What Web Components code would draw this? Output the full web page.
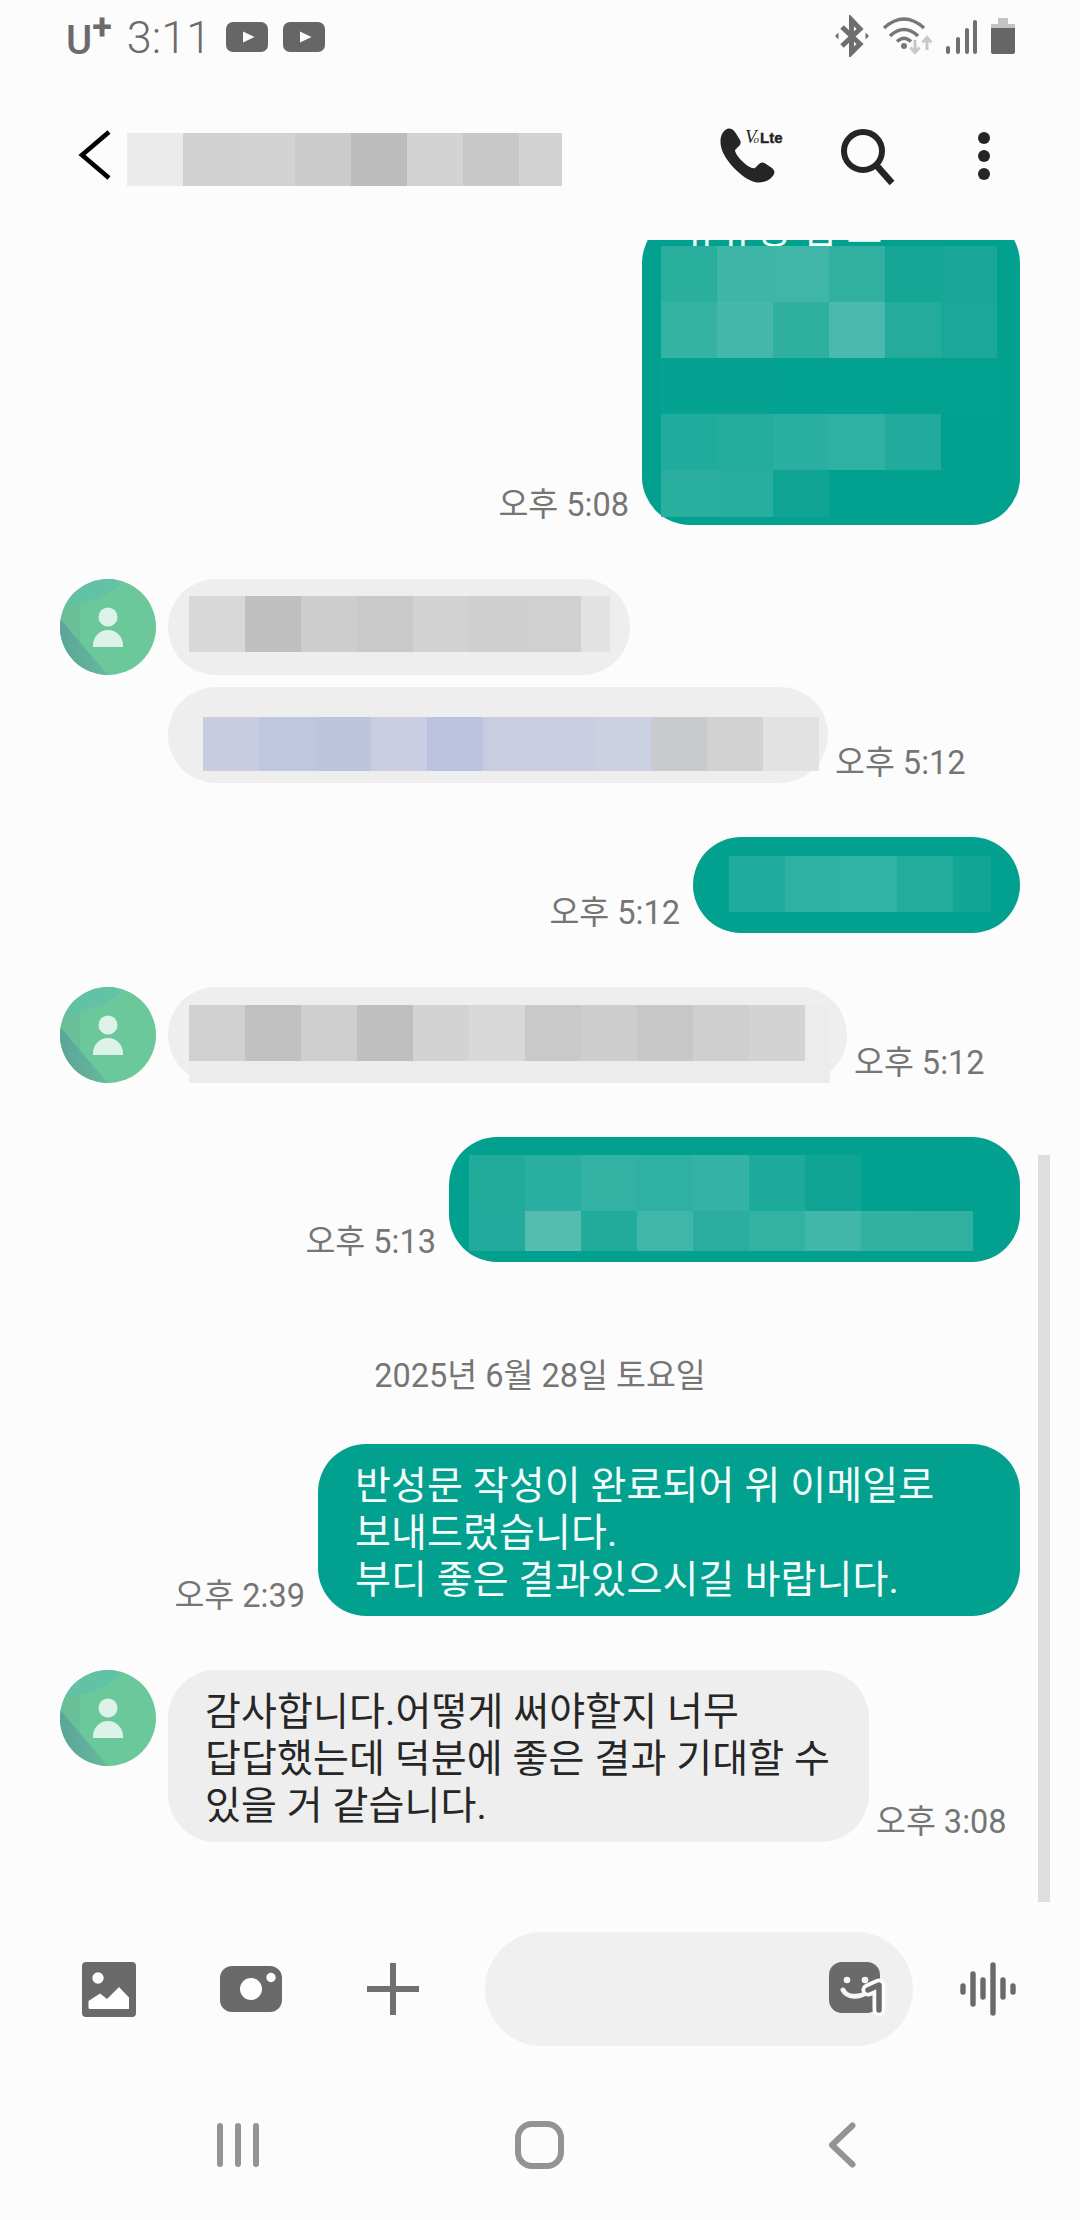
<!DOCTYPE html>
<html lang="ko">
<head>
<meta charset="utf-8">
<title>메시지</title>
<style>
html, body { margin: 0; padding: 0; }
body {
    width: 1080px;
    height: 2220px;
    display: flex;
    flex-direction: column;
    overflow: hidden;
    background: #fcfcfc;
    font-family: Roboto, "Noto Sans CJK KR", sans-serif;
}
</style>
</head>
<body>
<status-bar></status-bar>
<chat-header></chat-header>
<chat-list>
    <chat-message side="out" first time="오후 5:08" width="378" pad="0 23px 8px 19px">
        <clipped-line>규규정 법 그</clipped-line>
        <pixel-mosaic rows="56:2aae9e,3db5a7,3fb6a8,31b0a1,16a696,18a797;56:34b2a4,45b8ab,2fb09f,4ab9ae,24ab9c,1aa898;56:06a291,06a291,04a292,04a292,03a190,03a190;56:20ac9c,24ad9d,2bafa0,2fb0a2,21ab9c;47:29ae9f,28ae9e,0fa493"></pixel-mosaic>
    </chat-message>
    <chat-message side="in" avatar pad="17px 20px 23px 21px">
        <pixel-mosaic rows="56:d8d8d8,bfbfbf,cdcdcd,c9c9c9,d2d2d2,cfcfcf,d0d0d0,e2e2e2@29"></pixel-mosaic>
    </chat-message>
    <chat-message side="in" tight time="오후 5:12" pad="30px 9px 12px 35px">
        <pixel-mosaic rows="54:c7cce0,c2c7e0,bdc4de,c9cee2,bcc3de,c8cde1,c8cde1,cbd0e2,c9cace,d2d2d2,e2e2e2"></pixel-mosaic>
    </chat-message>
    <chat-message side="out" time="오후 5:12" pad="19px 29px 21px 36px">
        <pixel-mosaic rows="56:20ac9c,2eb1a2,32b2a4,22ac9c,10a595@38"></pixel-mosaic>
    </chat-message>
    <chat-message side="in" avatar time="오후 5:12" pad="18px 17px 0 21px">
        <pixel-mosaic rows="56:d0d0d0,c1c1c1,cfcfcf,bfbfbf,d3d3d3,d8d8d8,c9c9c9,cdcdcd,c7c7c7,cfcfcf,d3d3d3,ececec@25;22:ececec@641"></pixel-mosaic>
    </chat-message>
    <chat-message side="out" time="오후 5:13" pad="18px 47px 11px 20px">
        <pixel-mosaic rows="56:21ab9b,2aae9f,33b2a4,2eb1a2,34b2a5,1eaa9a,10a494;40:22ab9c,54bcb1,20ab9b,40b6a9,2bae9f,33b1a3,41b6aa,32b1a3,31b0a2"></pixel-mosaic>
    </chat-message>
    <chat-date>2025년 6월 28일 토요일</chat-date>
    <chat-message side="out" time="오후 2:39" width="702" pad="19px 37px 12px 37px">반성문 작성이 완료되어 위 이메일로<br>보내드렸습니다.<br>부디 좋은 결과있으시길 바랍니다.</chat-message>
    <chat-message side="in" avatar time="오후 3:08" width="701" pad="19px 37px 12px 37px">감사합니다.어떻게 써야할지 너무<br>답답했는데 덕분에 좋은 결과 기대할 수<br>있을 거 같습니다.</chat-message>
</chat-list>
<composer-bar></composer-bar>
<nav-bar></nav-bar>

<script>
const ICONS = {
    youtube: [42, 30, '<rect width="42" height="30" rx="7" fill="#666"/><path d="M17 9.500 28.500 15 17 20.500z" fill="#fcfcfc"/>'],
    bluetooth: [36, 42, '<path d="M8 12 26 29 17.500 37.500V5L26 14 8 31" fill="none" stroke="#6e6e6e" stroke-width="5"/><path d="M1 21 4.500 17.500V24.500zM35 21 31.500 17.500V24.500z" fill="#6e6e6e"/>'],
    wifi: [52, 42, '<g fill="none" stroke="#777" stroke-width="3.400"><path d="M2 13Q22-5 42 13"/><path d="M8 21Q22 8 36 21"/><path d="M15 26.500Q22 20 29 26.500"/></g><circle cx="22" cy="31" r="3" fill="#777"/><g fill="none" stroke="#c8c8c8" stroke-width="3"><path d="M33 25V37M28.500 32.500 33 37.500 37.500 32.500"/><path d="M45 35V23M40.500 27.500 45 22.500 49.500 27.500"/></g>'],
    signal: [32, 42, '<g fill="#707070"><rect x="0" y="31" width="4" height="8" rx="2"/><rect x="10" y="22" width="4" height="17" rx="2"/><rect x="19" y="13" width="4" height="26" rx="2"/><rect x="27" y="5" width="4" height="34" rx="2"/></g>'],
    battery: [26, 42, '<path d="M8 3H18V9H25V14H1V9H8z" fill="#c4c4c4"/><path d="M1 13H25V37Q25 39 23 39H3Q1 39 1 37z" fill="#666"/>'],
    chevron: [34, 52, '<path d="M31 3 4 26 31 49" fill="none" stroke="#000" stroke-width="4.600"/>'],
    phone: [84, 72, '<path d="M28 8.500C24 10 21 14 20.500 20C20 30 25 38 33 47C41 55 48 61 57 62.500C64 63 71 60 74 54C75 51 74 50 72 48L66 44C63 42 61 42 59 44L55 48C52 49 47 46 42 41C37 36 35 32 35 30L39 26C41 24 41 22 40 20L35 12C33 9 30 8 28 8.500Z" fill="#252525"/><text x="45" y="23" font-family="Liberation Serif" font-style="italic" font-size="19" fill="#252525">V<tspan font-size="11" dx="-3">o</tspan></text><text x="60" y="23" font-family="Liberation Sans" font-weight="700" font-size="15" stroke="#252525" stroke-width=".4" fill="#252525">Lte</text>'],
    search: [56, 60, '<circle cx="24" cy="24" r="19" fill="none" stroke="#252525" stroke-width="6"/><path d="M38 39 53 56" stroke="#252525" stroke-width="6.500"/>'],
    dots: [16, 52, '<g fill="#252525"><circle cx="8" cy="8" r="6"/><circle cx="8" cy="26" r="6"/><circle cx="8" cy="44" r="6"/></g>'],
    image: [54, 55, '<rect width="54" height="55" rx="4" fill="#6a6a6a"/><circle cx="16" cy="16" r="5.700" fill="#fff"/><path d="M6.500 41V39L18 31.500 25 37 37 25 47 35.500V47H8Q6.500 47 6.500 45.500z" fill="#fff"/>'],
    camera: [62, 46, '<rect width="62" height="46" rx="12" fill="#6a6a6a"/><circle cx="31" cy="23" r="11" fill="#fff"/><circle cx="51" cy="11.500" r="4.700" fill="#fff"/>'],
    plus: [52, 52, '<path d="M26 0V52M0 26H52" stroke="#707070" stroke-width="6"/>'],
    emoji: [58, 54, '<rect width="51" height="51" rx="13" fill="#6a6a6a"/><circle cx="18" cy="18" r="3.300" fill="#f5f5f5"/><circle cx="36" cy="18" r="3.300" fill="#f5f5f5"/><path d="M14 28C18 36 30 36 39 30" fill="none" stroke="#f5f5f5" stroke-width="5" stroke-linecap="round"/><path d="M39 28 50 23V48" fill="none" stroke="#fcfcfc" stroke-width="13" stroke-linecap="round" stroke-linejoin="round"/><path d="M39 28 50 23V48" fill="none" stroke="#6a6a6a" stroke-width="5.500" stroke-linecap="round" stroke-linejoin="round"/>'],
    wave: [56, 54, '<g stroke="#6a6a6a" stroke-width="5.400" stroke-linecap="round"><path d="M3 24V30M13 12V42M23 18V35M33 3V51M43 18V35M53 24V30"/></g>'],
    recents: [42, 44, '<g fill="#939393"><rect width="6" height="44" rx="3"/><rect x="18" width="6" height="44" rx="3"/><rect x="36" width="6" height="44" rx="3"/></g>'],
    home: [49, 48, '<rect x="3" y="3" width="43" height="42" rx="14" fill="none" stroke="#939393" stroke-width="6"/>'],
    back: [28, 46, '<path d="M24.500 3.500 4 23 24.500 42.500" fill="none" stroke="#939393" stroke-width="6" stroke-linecap="round" stroke-linejoin="round"/>']
};

class UiIcon extends HTMLElement {
    static get is() { return 'ui-icon'; }
    connectedCallback() {
        const [w, h, body] = ICONS[this.getAttribute('name')];
        this.attachShadow({mode: 'open'}).innerHTML = `
            <style>:host{display:block;flex:none;width:${w}px;height:${h}px} svg{display:block}</style>
            <svg width="${w}" height="${h}" viewBox="0 0 ${w} ${h}">${body}</svg>`;
    }
}

// rows="height:color,color@width;height:..." , a cell is 56 wide unless it says otherwise
class PixelMosaic extends HTMLElement {
    static get is() { return 'pixel-mosaic'; }
    connectedCallback() {
        const rows = this.getAttribute('rows').split(';').map(row => {
            const [h, cells] = row.split(':');
            const html = cells.split(',').map(cell => {
                const [color, w] = cell.split('@');
                return `<i style="background:#${color};width:${w || 56}px"></i>`;
            }).join('');
            return `<div style="height:${h}px">${html}</div>`;
        }).join('');
        this.attachShadow({mode: 'open'}).innerHTML = `
            <style>
            :host{display:block}
            div{display:flex}
            i{display:block;flex:none}
            </style>${rows}`;
    }
}

class ClippedLine extends HTMLElement {
    static get is() { return 'clipped-line'; }
    constructor() {
        super();
        this.attachShadow({mode: 'open'}).innerHTML = `
            <style>
            :host{display:block;height:31px;line-height:31px;padding-left:22px;overflow:hidden}
            </style><slot></slot>`;
    }
}

class StatusBar extends HTMLElement {
    static get is() { return 'status-bar'; }
    constructor() {
        super();
        this.attachShadow({mode: 'open'}).innerHTML = `
            <style>
            :host{display:flex;flex:none;height:78px;box-sizing:border-box;padding:15px 64px 0 66px;color:#6b6b6b}
            .brand{font-size:40px;font-weight:500;line-height:46px;margin-top:3px}
            .brand sup{font-size:36px;font-weight:700;line-height:0;vertical-align:15px;margin-left:0}
            .time{font-size:45px;font-weight:300;line-height:46px;margin:0 15px 0 15px}
            ui-icon[name=youtube]{margin:6.500px 15px 0 0}
            .right{display:flex;gap:12px;margin-left:auto}
            </style>
            <span class="brand">U<sup>+</sup></span>
            <span class="time">3:11</span>
            <ui-icon name="youtube"></ui-icon>
            <ui-icon name="youtube"></ui-icon>
            <div class="right">
                <ui-icon name="bluetooth"></ui-icon>
                <ui-icon name="wifi"></ui-icon>
                <ui-icon name="signal"></ui-icon>
                <ui-icon name="battery"></ui-icon>
            </div>`;
    }
}

class ChatHeader extends HTMLElement {
    static get is() { return 'chat-header'; }
    constructor() {
        super();
        this.attachShadow({mode: 'open'}).innerHTML = `
            <style>
            :host{display:flex;flex:none;height:162px;box-sizing:border-box;padding:0 88px 0 78px;align-items:flex-start}
            ui-icon[name=chevron]{margin:51px 15px 0 0}
            pixel-mosaic{margin-top:55px}
            ui-icon[name=phone]{margin:42px 0 0 auto}
            ui-icon[name=search]{margin:49px 0 0 55px}
            ui-icon[name=dots]{margin:52px 0 0 81px}
            </style>
            <ui-icon name="chevron"></ui-icon>
            <pixel-mosaic rows="53:ebebeb,d0d0d0,d3d3d3,cccccc,bcbcbc,d3d3d3,c8c8c8,d3d3d3@43"></pixel-mosaic>
            <ui-icon name="phone"></ui-icon>
            <ui-icon name="search"></ui-icon>
            <ui-icon name="dots"></ui-icon>`;
    }
}

class ChatList extends HTMLElement {
    static get is() { return 'chat-list'; }
    constructor() {
        super();
        this.attachShadow({mode: 'open'}).innerHTML = `
            <style>
            :host{display:block;flex:1;min-height:0;position:relative;overflow:hidden}
            .thumb{position:absolute;left:1038px;top:915px;width:12px;height:747px;background:#dedede}
            </style>
            <slot></slot>
            <div class="thumb"></div>`;
    }
}

class ChatDate extends HTMLElement {
    static get is() { return 'chat-date'; }
    constructor() {
        super();
        this.attachShadow({mode: 'open'}).innerHTML = `
            <style>
            :host{display:block;margin:96px 0 -4px;text-align:center;font-size:32.500px;line-height:36px;color:#757575}
            </style><slot></slot>`;
    }
}

const AVATAR = `<svg width="96" height="96" viewBox="0 0 96 96">
    <defs>
        <clipPath id="c"><circle cx="48" cy="48" r="48"/></clipPath>
        <linearGradient id="w" x1="0" y1="0" x2="1" y2="0"><stop offset="0" stop-color="#5ca49a"/><stop offset="1" stop-color="#66ba9a"/></linearGradient>
    </defs>
    <g clip-path="url(#c)">
        <rect width="96" height="96" fill="#6ac89b"/>
        <rect width="20" height="96" fill="#68bf98"/>
        <path d="M0 28Q34 26 62 5L50-4H0z" fill="#62c2a6"/>
        <path d="M0 40 48 96H0z" fill="url(#w)"/>
    </g>
    <ellipse cx="48" cy="38" rx="9.500" ry="9.500" fill="#ddf2e8"/>
    <path d="M33 68V66A15 15 0 0 1 63 66V68z" fill="#ddf2e8"/>
</svg>`;

class ChatMessage extends HTMLElement {
    static get is() { return 'chat-message'; }
    connectedCallback() {
        const outgoing = this.getAttribute('side') === 'out';
        const time = this.getAttribute('time');
        const width = this.getAttribute('width');
        const timeEl = time ? `<span class="time">${time}</span>` : '';
        const avatar = this.hasAttribute('avatar') ? `<div class="avatar">${AVATAR}</div>` : '';
        const bubble = `<div class="bubble"><slot></slot></div>`;
        this.attachShadow({mode: 'open'}).innerHTML = `
            <style>
            :host{display:flex;align-items:flex-end;margin-top:54px;justify-content:${outgoing ? 'flex-end' : 'flex-start'};
                padding:0 60px 0 ${!outgoing && !this.hasAttribute('avatar') ? 168 : 60}px}
            :host([tight]){margin-top:12px}
            :host([first]){margin-top:-25px}
            .avatar{flex:none;width:96px;height:96px;margin-right:12px;align-self:flex-start}
            .avatar svg{display:block}
            .bubble{flex:none;box-sizing:border-box;${width ? `width:${width}px;` : ''}padding:${this.getAttribute('pad')};
                border-radius:48px;white-space:nowrap;font-size:39px;line-height:47px;letter-spacing:.12px;
                background:${outgoing ? '#02a08f' : '#eeeeee'};color:${outgoing ? '#f4fbfa' : '#262626'}}
            .time{flex:none;font-size:32.500px;line-height:36px;color:#757575;margin:0 ${outgoing ? '13px' : '0'} 2px ${outgoing ? '0' : '7px'};white-space:nowrap}
            </style>
            ${outgoing ? timeEl + bubble : avatar + bubble + timeEl}`;
    }
}

class ComposerBar extends HTMLElement {
    static get is() { return 'composer-bar'; }
    constructor() {
        super();
        this.attachShadow({mode: 'open'}).innerHTML = `
            <style>
            :host{display:flex;flex:none;align-items:center;height:114px;margin-bottom:24px;padding-left:82px}
            ui-icon[name=camera]{margin-left:84px}
            ui-icon[name=plus]{margin:0 66px 0 85px}
            .field{flex:none;box-sizing:border-box;width:428px;height:114px;padding-right:26px;border-radius:57px;background:#f0f0f0;display:flex;align-items:center;justify-content:flex-end}
            ui-icon[name=wave]{margin-left:47px}
            </style>
            <ui-icon name="image"></ui-icon>
            <ui-icon name="camera"></ui-icon>
            <ui-icon name="plus"></ui-icon>
            <div class="field"><ui-icon name="emoji"></ui-icon></div>
            <ui-icon name="wave"></ui-icon>`;
    }
}

class NavBar extends HTMLElement {
    static get is() { return 'nav-bar'; }
    constructor() {
        super();
        this.attachShadow({mode: 'open'}).innerHTML = `
            <style>
            :host{display:flex;flex:none;align-items:center;height:150px;padding-left:217px}
            ui-icon[name=home]{margin:0 264px 0 256px}
            </style>
            <ui-icon name="recents"></ui-icon>
            <ui-icon name="home"></ui-icon>
            <ui-icon name="back"></ui-icon>`;
    }
}

[UiIcon, PixelMosaic, ClippedLine, StatusBar, ChatHeader, ChatList, ChatDate, ChatMessage, ComposerBar, NavBar]
    .forEach(c => window.customElements.define(c.is, c));
</script>
</body>
</html>
